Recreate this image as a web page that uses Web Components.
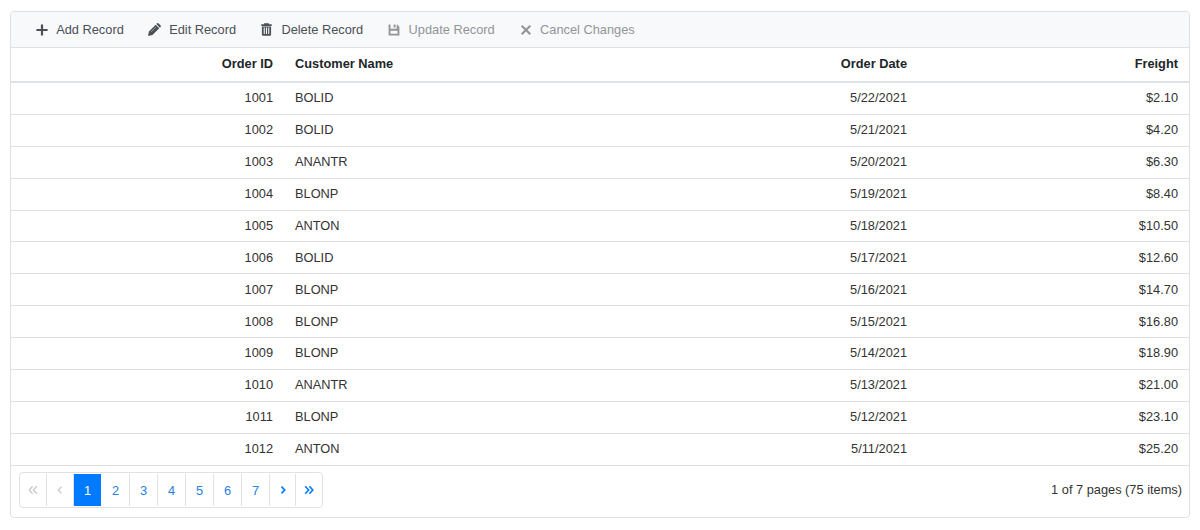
<!DOCTYPE html>
<html lang="en">
<head>
<meta charset="utf-8">
<title>Orders</title>
<style>
body{margin:0;background:#fff;font-family:"Liberation Sans",Arial,sans-serif;font-size:12.8px;color:#212529}
</style>
</head>
<body>
<order-grid></order-grid>
<script>
const define=(name,css,html)=>customElements.define(name,class extends HTMLElement{
  constructor(){super();
    this.attachShadow({mode:'open'}).innerHTML=`<style>*{box-sizing:border-box}${css}</style>${html(this)}`;}
});

const icons={
  add:['0 0 12 12','<path d="M4.900 .4h2.200v4.500h4.500v2.200H7.100v4.500H4.900V7.100H.4V4.900h4.500z"/>'],
  edit:['0 0 14 14','<path d="M.1 13.900l.9-4.700L8.300 1.900l3.800 3.800-7.300 7.300z"/><path d="M9 1.200l.8-.8q.7-.6 1.400 0l2.400 2.400q.6.7 0 1.400l-.8.8z"/><path d="M3 9.800l5.600-5.500" stroke="#f8f9fa" stroke-width=".45"/>'],
  trash:['0 0 12 13','<path d="M3.600 1.200V.3h4.800v.9h2.800v1.900H.8V1.200z"/><path fill-rule="evenodd" d="M1.400 3.600h9.200v7.900q0 1.200-1.200 1.200H2.600q-1.200 0-1.200-1.200zM3.200 4.600v6.400h1.100V4.600zm2.250 0v6.400h1.100V4.600zm2.250 0v6.400h1.100V4.600z"/>'],
  save:['0 0 12 12','<path fill-rule="evenodd" d="M.6.6h1.900v4.200h6.200V.6h.5l2.200 2.200v8.600H.6zM2.500 6.700v3h7v-3z"/><path d="M5.600.6h2v2.900h-2z"/>'],
  cancel:['0 0 12 12','<path d="M1.700 1.700l8.600 8.600m0-8.600l-8.600 8.600" fill="none" stroke="currentColor" stroke-width="2.100"/>'],
  first:['0 0 10 10','<path d="M4.600 1.300L1.200 5l3.400 3.700M8.800 1.300L5.400 5l3.400 3.700" fill="none" stroke="currentColor" stroke-width="1.300"/>'],
  prev:['0 0 10 10','<path d="M6.500 1.600L3.300 5l3.200 3.400" fill="none" stroke="currentColor" stroke-width="1.300"/>'],
  next:['0 0 10 10','<path d="M3.500 1.600L6.700 5 3.500 8.400" fill="none" stroke="currentColor" stroke-width="1.700"/>'],
  last:['0 0 10 10','<path d="M1.200 1.300L4.600 5 1.200 8.700M5.400 1.300L8.800 5 5.400 8.700" fill="none" stroke="currentColor" stroke-width="1.600"/>']
};
define('ui-icon',':host{display:block;width:12px;height:12px;flex:none}svg{display:block;width:100%;height:100%;fill:currentColor}',
  e=>{const [box,art]=icons[e.getAttribute('name')];return `<svg viewBox="${box}" aria-hidden="true">${art}</svg>`});

define('tool-button',`
  :host{display:flex;align-items:center;color:#495057;line-height:20px;white-space:nowrap}
  :host([disabled]){color:#919599}
  .icon{display:flex;justify-content:center;width:13px;margin-right:8px}
  ui-icon[name=edit],ui-icon[name=trash]{width:13px;height:13px}`,
  e=>`<span class="icon"><ui-icon name="${e.getAttribute('icon')}"></ui-icon></span><slot></slot>`);

define('grid-toolbar',`
  :host{display:flex;align-items:center;gap:24.4px;height:36px;padding:0 0 0 24.2px;background:#f8f9fa;border-bottom:1px solid #dee2e6;border-radius:3px 3px 0 0;box-sizing:border-box}`,
  ()=>'<slot></slot>');

define('grid-row',`
  :host{display:grid;grid-template-columns:273px 352px 282px 1fr;align-items:center;height:31.89px;border-bottom:1px solid #dee2e6;color:#333;box-sizing:border-box}
  :host([header]){height:35px;padding-bottom:1px;border-bottom-width:2px;font-weight:700;color:#212529}
  div{padding:0 11px;text-align:right;white-space:nowrap;line-height:20px}
  .name{text-align:left}`,
  ()=>'<div><slot name="id"></slot></div><div class="name"><slot name="name"></slot></div><div><slot name="date"></slot></div><div><slot name="freight"></slot></div>');

define('page-button',`
  :host{display:flex;align-items:center;justify-content:center;width:28px;border-right:1px solid #dee2e6;color:#2680e0;box-sizing:border-box}
  :host([small]){width:26px;color:#007bff}
  :host([small][disabled]){width:27px;color:#c5c9cd}
  :host(:last-child){border-right:0}
  :host([active]){background:#007bff;color:#fff;border-color:#fff}
  ui-icon{width:10px;height:10px}`,
  e=>e.hasAttribute('icon')?`<ui-icon name="${e.getAttribute('icon')}"></ui-icon>`:'<slot></slot>');

define('grid-pager',`
  :host{display:flex;align-items:center;justify-content:space-between;height:51px;padding:0 7px 0 8px;box-sizing:border-box}
  nav{display:flex;height:36px;padding:1px 0;border:1px solid #dee2e6;border-radius:4px;margin-bottom:2px}
  .info{color:#333;margin-bottom:3px}`,
  ()=>`<nav><page-button small disabled icon="first"></page-button><page-button small disabled icon="prev"></page-button>${
  [1,2,3,4,5,6,7].map(n=>`<page-button${n===1?' active':''}>${n}</page-button>`).join('')
  }<page-button small icon="next"></page-button><page-button small icon="last"></page-button></nav><span class="info"><slot></slot></span>`);

const names=['BOLID','BOLID','ANANTR','BLONP','ANTON','BOLID','BLONP','BLONP','BLONP','ANANTR','BLONP','ANTON'];
const row=(attr,...v)=>`<grid-row ${attr}>${['id','name','date','freight'].map((k,i)=>`<span slot="${k}">${v[i]}</span>`).join('')}</grid-row>`;
define('order-grid',`
  :host{display:block;width:1180px;height:507px;margin:11px 0 0 10px;border:1px solid #dee2e6;border-radius:4px;box-sizing:border-box}`,
  ()=>`<grid-toolbar>
    <tool-button icon="add">Add Record</tool-button>
    <tool-button icon="edit">Edit Record</tool-button>
    <tool-button icon="trash">Delete Record</tool-button>
    <tool-button icon="save" disabled>Update Record</tool-button>
    <tool-button icon="cancel" disabled>Cancel Changes</tool-button>
  </grid-toolbar>${row('header','Order ID','Customer Name','Order Date','Freight')}${
  names.map((n,i)=>row('',1001+i,n,`5/${22-i}/2021`,'$'+(2.1*(i+1)).toFixed(2))).join('')
  }<grid-pager>1 of 7 pages (75 items)</grid-pager>`);
</script>
</body>
</html>
